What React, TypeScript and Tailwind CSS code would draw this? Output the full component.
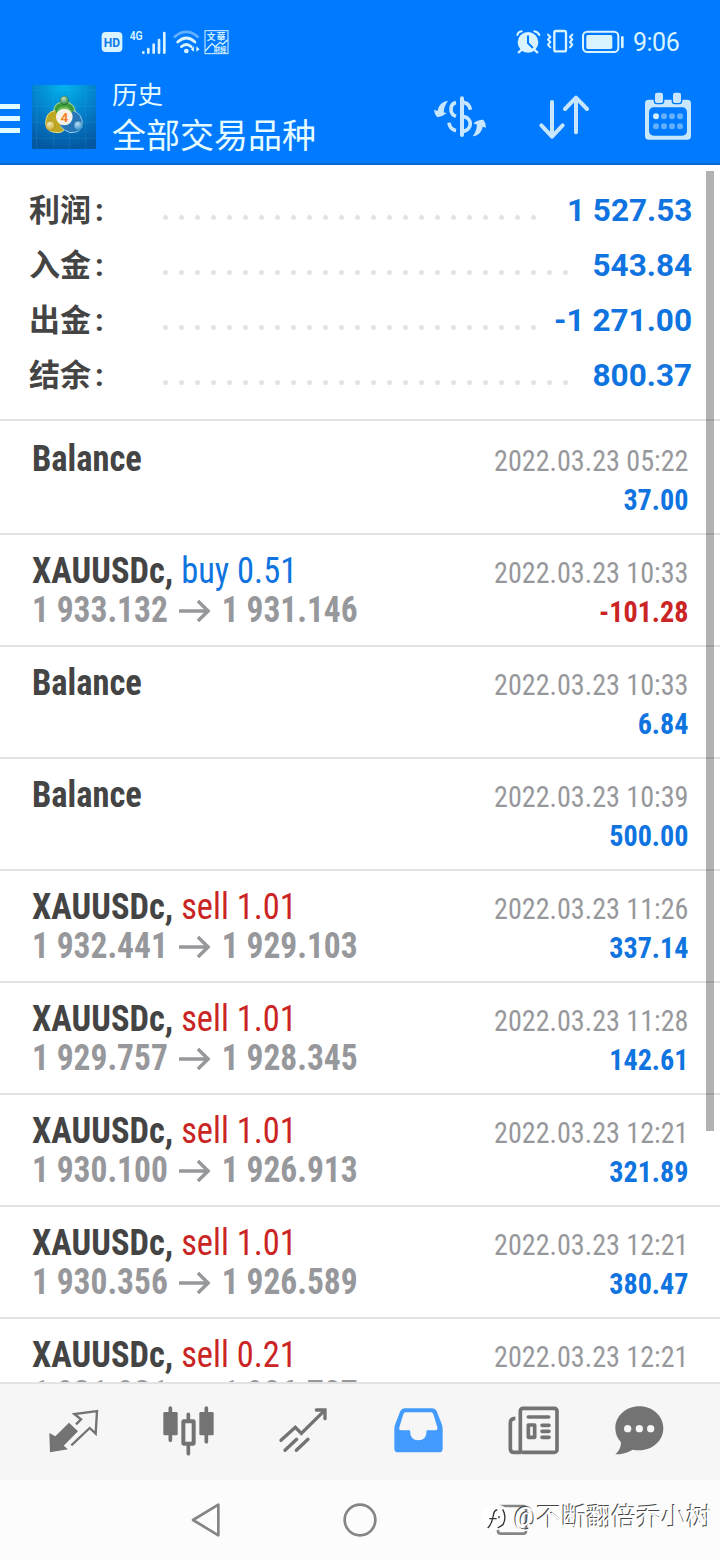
const summary = [
  { label: "利润", value: "1 527.53", dots: 24 },
  { label: "入金", value: "543.84", dots: 26 },
  { label: "出金", value: "-1 271.00", dots: 24 },
  { label: "结余", value: "800.37", dots: 26 },
];

const deals = [
  { name: "Balance", date: "2022.03.23 05:22", profit: "37.00" },
  { name: "XAUUSDc,", side: "buy", lot: "0.51", open: "1 933.132", close: "1 931.146", date: "2022.03.23 10:33", profit: "-101.28" },
  { name: "Balance", date: "2022.03.23 10:33", profit: "6.84" },
  { name: "Balance", date: "2022.03.23 10:39", profit: "500.00" },
  { name: "XAUUSDc,", side: "sell", lot: "1.01", open: "1 932.441", close: "1 929.103", date: "2022.03.23 11:26", profit: "337.14" },
  { name: "XAUUSDc,", side: "sell", lot: "1.01", open: "1 929.757", close: "1 928.345", date: "2022.03.23 11:28", profit: "142.61" },
  { name: "XAUUSDc,", side: "sell", lot: "1.01", open: "1 930.100", close: "1 926.913", date: "2022.03.23 12:21", profit: "321.89" },
  { name: "XAUUSDc,", side: "sell", lot: "1.01", open: "1 930.356", close: "1 926.589", date: "2022.03.23 12:21", profit: "380.47" },
  { name: "XAUUSDc,", side: "sell", lot: "0.21", open: "1 931.931", close: "1 926.787", date: "2022.03.23 12:21" },
];

function StatusBar() {
  return (
    <div className="flex h-20 items-center pt-1 pl-[101px] pr-10 text-[#d9f4ff]">
      <svg className="h-[22px] w-[22px]" viewBox="0 0 66 66">
        <rect x="2" y="3" width="62" height="60" rx="12" fill="#d9f4ff" />
        <text x="33" y="48" textAnchor="middle" fontSize="41" fontWeight="700" textLength="49" lengthAdjust="spacingAndGlyphs" fill="#1279e8" fontFamily="Roboto">HD</text>
      </svg>
      <svg className="ml-[6px] h-[26px] w-[38px]" viewBox="0 0 114 78">
        <text x="2" y="33" fontSize="39" fontWeight="600" textLength="39" lengthAdjust="spacingAndGlyphs" fill="currentColor" fontFamily="Roboto">4G</text>
        <path d="M43 70v1M58 60v11M74 47v24M90 33v38M106 12v59" stroke="currentColor" strokeWidth="8" strokeLinecap="round" />
      </svg>
      <svg className="ml-[6px] h-[26px] w-[28px]" viewBox="0 0 84 78" fill="none" stroke="currentColor" strokeWidth="8" strokeLinecap="round">
        <path d="M5 23Q40-6 74 23" opacity=".45" />
        <path d="M14 39Q40 15 66 39" />
        <path d="M25 53Q40 40 55 53" />
        <circle cx="40" cy="66" r="3" fill="currentColor" />
        <path d="M63 52v16l-10-7zM70 52v16l10-7z" fill="currentColor" stroke="none" />
      </svg>
      <svg className="ml-[3px] h-[26px] w-[25px]" viewBox="0 0 75 78" fill="none" stroke="currentColor">
        <rect x="3" y="5" width="69" height="69" strokeWidth="3" />
        <g fill="currentColor" stroke="none" fontFamily="'Noto Sans CJK TC'" fontWeight="700">
          <text x="8" y="32" fontSize="26">文</text>
          <text x="38" y="32" fontSize="26">華</text>
          <text x="29" y="69" fontSize="19">財經</text>
        </g>
        <path d="M4 66l20-22 10 9 14-13 8 6 15-14" strokeWidth="4" />
      </svg>

      <svg className="ml-auto h-[26px] w-[26px]" viewBox="0 0 78 78" fill="none" stroke="currentColor">
        <circle cx="39" cy="40" r="31" fill="currentColor" stroke="none" />
        <path d="M7 18Q10 8 20 7M58 7Q68 8 73 18" strokeWidth="6" strokeLinecap="round" />
        <path d="M18 64l-7 6M60 64l7 6" strokeWidth="7" strokeLinecap="round" />
        <path d="M39 22v20l13 13" stroke="#007aff" strokeWidth="6" strokeLinecap="round" />
      </svg>
      <svg className="ml-[5px] h-[26px] w-[28px]" viewBox="0 0 84 78" fill="none" stroke="currentColor" strokeLinecap="round" strokeLinejoin="round">
        <rect x="25" y="6" width="35" height="61" rx="5" strokeWidth="7" />
        <path d="M6 17l7 7-7 8 7 7-7 8 7 8M79 17l-7 7 7 8-7 7 7 8-7 8" strokeWidth="6" />
      </svg>
      <svg className="ml-[8px] h-[24px] w-[43px]" viewBox="0 0 129 72" fill="none" stroke="currentColor">
        <rect x="3" y="5" width="106" height="61" rx="13" strokeWidth="6" />
        <rect x="13" y="15" width="78" height="42" rx="5" fill="currentColor" stroke="none" />
        <path d="M121 22v29" strokeWidth="8" strokeLinecap="round" />
      </svg>
      <span className="ml-2 w-[47px] font-[Roboto] text-[25px] leading-none tracking-[-0.5px]">9:06</span>
    </div>
  );
}

function AppLogo() {
  return (
    <svg className="ml-3 h-16 w-16" viewBox="0 0 192 192">
      <defs>
        <radialGradient id="sky" cx=".5" cy="0" r="1">
          <stop offset="0" stopColor="#00b4ee" />
          <stop offset=".6" stopColor="#0478c4" />
          <stop offset="1" stopColor="#0458a2" />
        </radialGradient>
        <radialGradient id="ball" cx=".4" cy=".3" r=".8">
          <stop offset="0" stopColor="#fff" stopOpacity=".7" />
          <stop offset="1" stopColor="#fff" stopOpacity="0" />
        </radialGradient>
      </defs>
      <rect width="192" height="192" fill="url(#sky)" />
      <path d="M14 0v192M65 0v192M113 0v192M161 0v192M0 15h192M0 64h192M0 112h192M0 160h192" stroke="#48b8e8" strokeOpacity=".25" strokeWidth="2" />
      <path d="M66 102Q60 58 83 53H111Q136 64 129 102" fill="#3f9a3c" stroke="#b9dd9c" strokeWidth="3" />
      <path d="M70 77Q40 80 41 118Q42 142 78 143Q98 142 100 124" fill="#bda823" stroke="#e9dd84" strokeWidth="3" />
      <path d="M124 77Q150 86 152 118Q150 143 114 143Q98 138 84 122" fill="#2676b8" stroke="#95cbee" strokeWidth="3" />
      <path d="M76 98Q70 72 88 65H106Q124 74 118 98" fill="#6fbb55" />
      <g stroke="#00000033" strokeWidth="2">
        <circle cx="97" cy="46" r="13" fill="#218036" />
        <circle cx="55" cy="122" r="14" fill="#c9a81d" />
        <circle cx="139" cy="122" r="14" fill="#2186cc" />
      </g>
      <g fill="url(#ball)">
        <circle cx="97" cy="46" r="12" />
        <circle cx="55" cy="122" r="13" />
        <circle cx="139" cy="122" r="13" />
      </g>
      <circle cx="97" cy="96" r="25" fill="#f4f1e9" />
      <text x="97" y="110" textAnchor="middle" fontSize="41" fontWeight="700" fill="#f28427" fontFamily="Roboto">4</text>
    </svg>
  );
}

function AppBar() {
  return (
    <div className="flex h-[85px] items-center border-b-2 border-[#0a6bd0] pb-[9px]">
      <div className="flex w-5 flex-col gap-[7px] pt-[3px]">
        <div className="h-[5px] bg-[#e2fbff]"></div>
        <div className="h-[5px] bg-[#e2fbff]"></div>
        <div className="h-[5px] bg-[#e2fbff]"></div>
      </div>
      <AppLogo />
      <div className="ml-4 pt-px text-[#e4fbff]">
        <div className="text-[25.5px] leading-[37px]">历史</div>
        <div className="text-[34px] leading-[44px]">全部交易品种</div>
      </div>
      <div className="ml-auto flex items-center pr-[25px] text-[#c8e7ff]">
        <svg className="h-[50px] w-[54px]" viewBox="39 34 162 150" fill="none" stroke="currentColor" strokeWidth="11">
          <path d="M126 53v110" strokeLinecap="round" strokeWidth="12" />
          <path d="M108 66C88 70 88 100 108 107M87 126Q89 146 108 150M130 65Q148 68 151 87M130 108C158 112 157 147 130 152" />
          <g fill="currentColor" stroke="none">
            <path d="M84 60C68 62 56 72 53 90L42 88Q43 102 52 110Q66 109 80 98L71 95Q72 76 84 60z" />
            <path d="M158 167C174 165 185 155 188 138L198 141Q198 126 190 117Q174 116 160 128L171 132Q170 150 158 167z" />
          </g>
        </svg>
        <svg className="ml-[50px] h-[50px] w-[54px]" viewBox="351 34 162 150" fill="none" stroke="currentColor" strokeWidth="12" strokeLinecap="round" strokeLinejoin="round">
          <path d="M396 64v104M364 134l32 34 32-34M468 155V51M435 85l33-34 33 34" />
        </svg>
        <svg className="ml-[50px] h-[50px] w-[54px]" viewBox="663 34 162 150">
          <rect x="675" y="57" width="138" height="120" rx="11" fill="currentColor" />
          <rect x="687" y="80" width="114" height="85" rx="14" fill="#007aff" />
          <rect x="703" y="34" width="28" height="35" rx="8" fill="currentColor" stroke="#007aff" strokeWidth="4" />
          <rect x="757" y="34" width="28" height="35" rx="8" fill="currentColor" stroke="#007aff" strokeWidth="4" />
          <g fill="#64b1ff">
            <circle cx="708" cy="107" r="9" fill="#d4efff" />
            <circle cx="732" cy="107" r="9" />
            <circle cx="756" cy="107" r="9" />
            <circle cx="780" cy="107" r="9" />
            <circle cx="708" cy="137" r="9" />
            <circle cx="732" cy="137" r="9" />
            <circle cx="756" cy="137" r="9" />
            <circle cx="780" cy="137" r="9" />
          </g>
        </svg>
      </div>
    </div>
  );
}

function Deal({ deal, first }: { deal: any; first: boolean }) {
  const sideColor = deal.side === "buy" ? "text-[#1074e0]" : "text-[#cb2424]";
  const profitColor = deal.profit?.startsWith("-") ? "text-[#cb2424]" : "text-[#1074e0]";
  return (
    <div className={`flex shrink-0 justify-between border-b-2 border-[#e3e3e3] px-8 font-['Roboto_Condensed',Roboto,sans-serif] [font-stretch:75%] ${first ? "h-[114px] pt-[2px]" : "h-28"}`}>
      <div className="pt-[17px] text-4xl leading-[39px] whitespace-nowrap">
        <div className="origin-left scale-x-[0.957]">
          <span className="font-bold text-[#444]">{deal.name}</span>
          {deal.side && <span className={sideColor}> {deal.side} {deal.lot}</span>}
        </div>
        {deal.open && (
          <div className="flex origin-left scale-x-[0.93] items-center font-bold text-[#97989b]">
            <span>{deal.open}</span>
            <svg className="mx-3 h-[22px] w-[34px]" viewBox="0 0 102 66" fill="none" stroke="currentColor" strokeWidth="11">
              <path d="M0 33h94M61 3l33 30-33 30" />
            </svg>
            <span>{deal.close}</span>
          </div>
        )}
      </div>
      <div className="origin-right scale-x-[0.937] pt-[18px] text-right text-[30px] leading-[39px] whitespace-nowrap">
        <div className="text-[#97989b]">{deal.date}</div>
        {deal.profit && <div className={`font-bold ${profitColor}`}>{deal.profit}</div>}
      </div>
    </div>
  );
}

function TabBar() {
  return (
    <div className="flex h-[98px] shrink-0 items-center border-t-2 border-[#e3e3e3] bg-[#f6f6f6] pb-1 pl-4 text-[#737373]">
      <div className="flex w-[115px] justify-center">
        <svg className="h-[51px] w-[51px]" viewBox="144 224 153 153">
          <path d="M148 308l18 10 41-41 27 26-43 43 13 11-54 9z" fill="currentColor" />
          <path d="M228 282l15-15-20-16 68-9-4 68-18-17-55 52" fill="none" stroke="currentColor" strokeWidth="7" />
        </svg>
      </div>
      <div className="flex w-[115px] justify-center">
        <svg className="h-[51px] w-[51px]" viewBox="489 224 153 153" fill="currentColor">
          <path d="M511 233v97M619 233v101M565 252v20M565 342v28" stroke="currentColor" strokeWidth="11" strokeLinecap="round" />
          <rect x="490" y="245" width="43" height="70" rx="4" />
          <rect x="598" y="245" width="43" height="70" rx="4" />
          <rect x="550" y="273" width="31" height="67" rx="1" fill="#f6f6f6" stroke="currentColor" strokeWidth="12" />
        </svg>
      </div>
      <div className="flex w-[115px] justify-center">
        <svg className="h-[51px] w-[51px]" viewBox="834 224 153 153" fill="none" stroke="currentColor" strokeWidth="10" strokeLinecap="round">
          <path d="M843 330l43-39 18 18 70-69M949 239h26v26M855 360l35-33M889 360l35-33" />
        </svg>
      </div>
      <div className="flex w-[115px] justify-center text-[#449bfe]">
        <svg className="h-[51px] w-[51px]" viewBox="99 224 153 153" fill="currentColor">
          <path fillRule="evenodd" d="M134 234h83q9 0 13 8l14 36q4 9 4 18v59q0 11-11 11H114q-11 0-11-11V296q0-9 4-18l14-36q4-8 13-8zM137 246q-5 0-7 6l-12 39q-2 9 5 9h27q0 30 25 30t25-30h27q7 0 5-9l-12-39q-2-6-7-6z" />
        </svg>
      </div>
      <div className="flex w-[115px] justify-center">
        <svg className="h-[51px] w-[51px]" viewBox="444 224 153 153" fill="none" stroke="currentColor" strokeWidth="11" strokeLinecap="round">
          <rect x="481" y="234" width="110" height="132" rx="8" />
          <path d="M466 264q-15 0-15 14v77q0 11 12 11h20" strokeLinecap="butt" />
          <path d="M505 260h61M546 285h21M546 303h21M546 321h21" />
          <rect x="505" y="284" width="19" height="37" strokeLinejoin="round" />
        </svg>
      </div>
      <div className="flex w-24 justify-center">
        <svg className="h-[51px] w-[51px]" viewBox="761 224 153 153" fill="currentColor">
          <path d="M837 228c40 0 72 29 72 66s-32 66-72 66q-11 0-20-2-23 14-52 14 17-15 17-36-17-18-17-42c0-37 32-66 72-66z" />
          <g fill="#f6f6f6">
            <circle cx="802" cy="295" r="11" />
            <circle cx="837" cy="295" r="11" />
            <circle cx="871" cy="295" r="11" />
          </g>
        </svg>
      </div>
    </div>
  );
}

function SystemNav() {
  return (
    <div className="relative flex h-20 shrink-0 items-center bg-[#fcfcfc] pl-[189px] text-[#858585]">
      <svg className="h-9 w-9" viewBox="0 0 108 108" fill="none" stroke="currentColor" strokeWidth="8" strokeLinejoin="round">
        <path d="M12 54l76-46v92z" />
      </svg>
      <svg className="ml-[117px] h-9 w-9" viewBox="0 0 108 108" fill="none" stroke="currentColor" strokeWidth="8">
        <circle cx="54" cy="54" r="46" />
      </svg>
      <svg className="ml-[116px] h-9 w-9" viewBox="0 0 108 108" fill="none" stroke="currentColor" strokeWidth="8">
        <rect x="12" y="12" width="84" height="83" rx="8" />
      </svg>
      {/* watermark runs over the recents button */}
      <div className="absolute top-[21px] left-[482px] flex items-center text-[25px] leading-[34px] whitespace-nowrap text-white [text-shadow:-1px_-1px_0_#444]">
        <svg className="h-7 w-7" viewBox="0 0 84 84" fill="none">
          <rect x="2" y="2" width="76" height="76" rx="30" fill="#fff" />
          <path d="M17 72q12-10 17-38 2-16 12-16M22 44h22M62 16q13 22 1 46l-16 10M51 36v7" stroke="#333" strokeWidth="4" />
        </svg>
        <span className="ml-[4px]">@不断翻倍乔小树</span>
      </div>
    </div>
  );
}

export default function App() {
  return (
    <div className="relative flex h-[1560px] w-[720px] flex-col overflow-hidden bg-white font-['Roboto','Noto_Sans_CJK_SC',sans-serif]">
      <div className="h-[165px] shrink-0 bg-[#007aff]">
        <StatusBar />
        <AppBar />
      </div>

      <div className="flex min-h-0 flex-1 flex-col overflow-hidden">
        <div className="h-64 shrink-0 border-b-2 border-[#e3e3e3] pt-[17px] pl-[29px] pr-7">
          {summary.map((item) => (
            <div key={item.label} className="flex h-[55px] items-center text-[32px] font-bold">
              <div className="flex w-[134px] pt-1 text-[31px] text-[#444]">
                {item.label}
                <span className="ml-1">:</span>
              </div>
              <div className="flex gap-[11px] pt-[15px]">
                {Array.from({ length: item.dots }, (_, i) => (
                  <div key={i} className="h-[5px] w-[5px] rounded-full bg-[#e3e3e3]"></div>
                ))}
              </div>
              <div className="ml-auto origin-right scale-x-[0.985] whitespace-nowrap text-[#1074e0]">{item.value}</div>
            </div>
          ))}
        </div>
        {deals.map((deal, i) => (
          <Deal key={i} deal={deal} first={i === 0} />
        ))}
      </div>

      <TabBar />
      <SystemNav />
      <div className="absolute top-[171px] right-[6px] h-[960px] w-2 bg-black/30"></div>
    </div>
  );
}
